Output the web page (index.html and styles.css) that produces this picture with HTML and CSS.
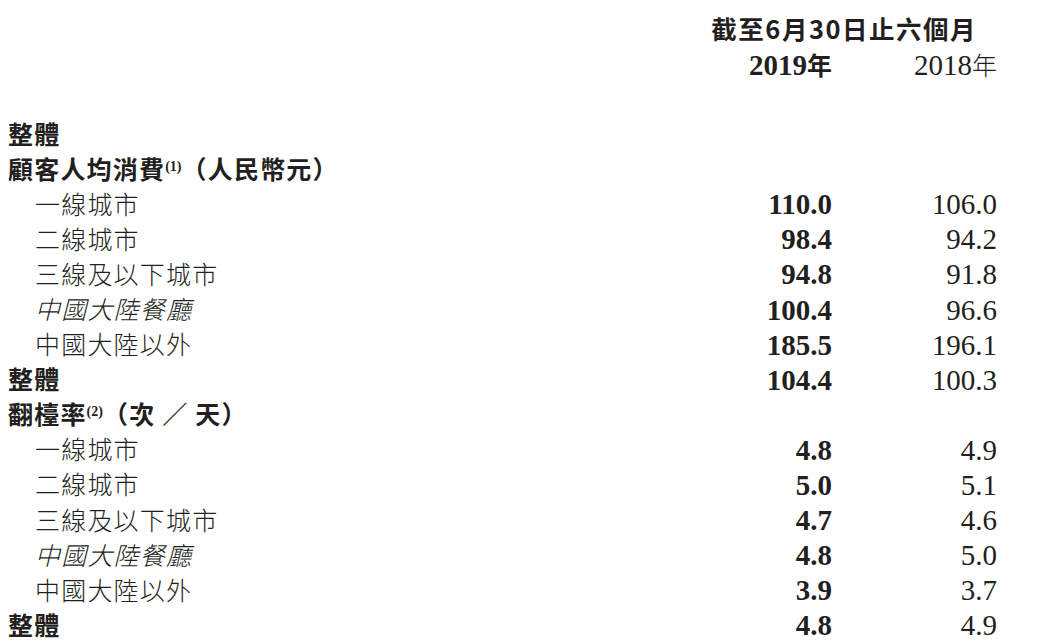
FILE: index.html
```html
<!DOCTYPE html>
<html lang="zh-Hant">
<head>
<meta charset="utf-8">
<link rel="stylesheet" href="styles.css">
</head>
<body>
<div class="page">
  <div class="head">
    <div class="period">截至6月30日止六個月</div>
    <div class="years">
      <span class="y cur">2019<span class="nian">年</span></span>
      <span class="y prev">2018<span class="nian">年</span></span>
    </div>
  </div>
  <div class="table">
    <div class="lab top">整體</div><div class="v"></div><div class="v"></div>
    <div class="lab top">顧客人均消費<sup>(1)</sup>（人民幣元）</div><div class="v"></div><div class="v"></div>
    <div class="lab sub">一線城市</div><div class="v b">110.0</div><div class="v">106.0</div>
    <div class="lab sub">二線城市</div><div class="v b">98.4</div><div class="v">94.2</div>
    <div class="lab sub">三線及以下城市</div><div class="v b">94.8</div><div class="v">91.8</div>
    <div class="lab sub it">中國大陸餐廳</div><div class="v b">100.4</div><div class="v">96.6</div>
    <div class="lab sub">中國大陸以外</div><div class="v b">185.5</div><div class="v">196.1</div>
    <div class="lab top">整體</div><div class="v b">104.4</div><div class="v">100.3</div>
    <div class="lab top">翻檯率<sup>(2)</sup>（次 ／ 天）</div><div class="v"></div><div class="v"></div>
    <div class="lab sub">一線城市</div><div class="v b">4.8</div><div class="v">4.9</div>
    <div class="lab sub">二線城市</div><div class="v b">5.0</div><div class="v">5.1</div>
    <div class="lab sub">三線及以下城市</div><div class="v b">4.7</div><div class="v">4.6</div>
    <div class="lab sub it">中國大陸餐廳</div><div class="v b">4.8</div><div class="v">5.0</div>
    <div class="lab sub">中國大陸以外</div><div class="v b">3.9</div><div class="v">3.7</div>
    <div class="lab top">整體</div><div class="v b">4.8</div><div class="v">4.9</div>
  </div>
</div>
</body>
</html>
```
FILE: styles.css
```css
html, body {
  margin: 0;
  padding: 0;
  background: #ffffff;
}
body {
  color: #231f20;
  font-family: "Noto Sans CJK TC", "Noto Sans CJK SC", sans-serif;
}
.page {
  width: 989px;
  padding: 11px 0 0 8px;
}
.head {
  display: flex;
  flex-direction: column;
  align-items: flex-end;
}
.period {
  font-weight: 700;
  font-size: 25.5px;
  line-height: 34px;
  margin-right: 20px;
  letter-spacing: 1.5px;
}
.years {
  display: flex;
  height: 38px;
  align-items: center;
}
.y {
  font-family: "Liberation Serif", "Noto Sans CJK TC", serif;
  font-size: 29px;
  text-align: right;
}
.y .nian {
  font-family: "Noto Sans CJK TC", sans-serif;
  font-size: 25px;
}
.y.cur { font-weight: 700; width: 110px; margin-right: 55px; }
.y.cur .nian { font-weight: 700; }
.y.prev { width: 110px; }
.y.prev .nian { font-weight: 300; }
.table {
  margin-top: 32px;
  display: grid;
  grid-template-columns: 1fr 100px 165px;
  grid-auto-rows: 35.1px;
  align-items: center;
}
.lab {
  font-size: 25px;
  white-space: nowrap;
  letter-spacing: 1.2px;
}
.lab.top { font-weight: 700; }
.lab.sub { font-weight: 300; padding-left: 27px; }
.lab.it { font-style: italic; }
.lab sup {
  font-family: "Liberation Serif", serif;
  font-weight: 700;
  font-size: 14px;
  vertical-align: 8px;
  line-height: 0;
  letter-spacing: 0;
}
.v {
  font-family: "Liberation Serif", serif;
  font-size: 29px;
  text-align: right;
  padding-top: 4px;
}
.v.b { font-weight: 700; }
```
